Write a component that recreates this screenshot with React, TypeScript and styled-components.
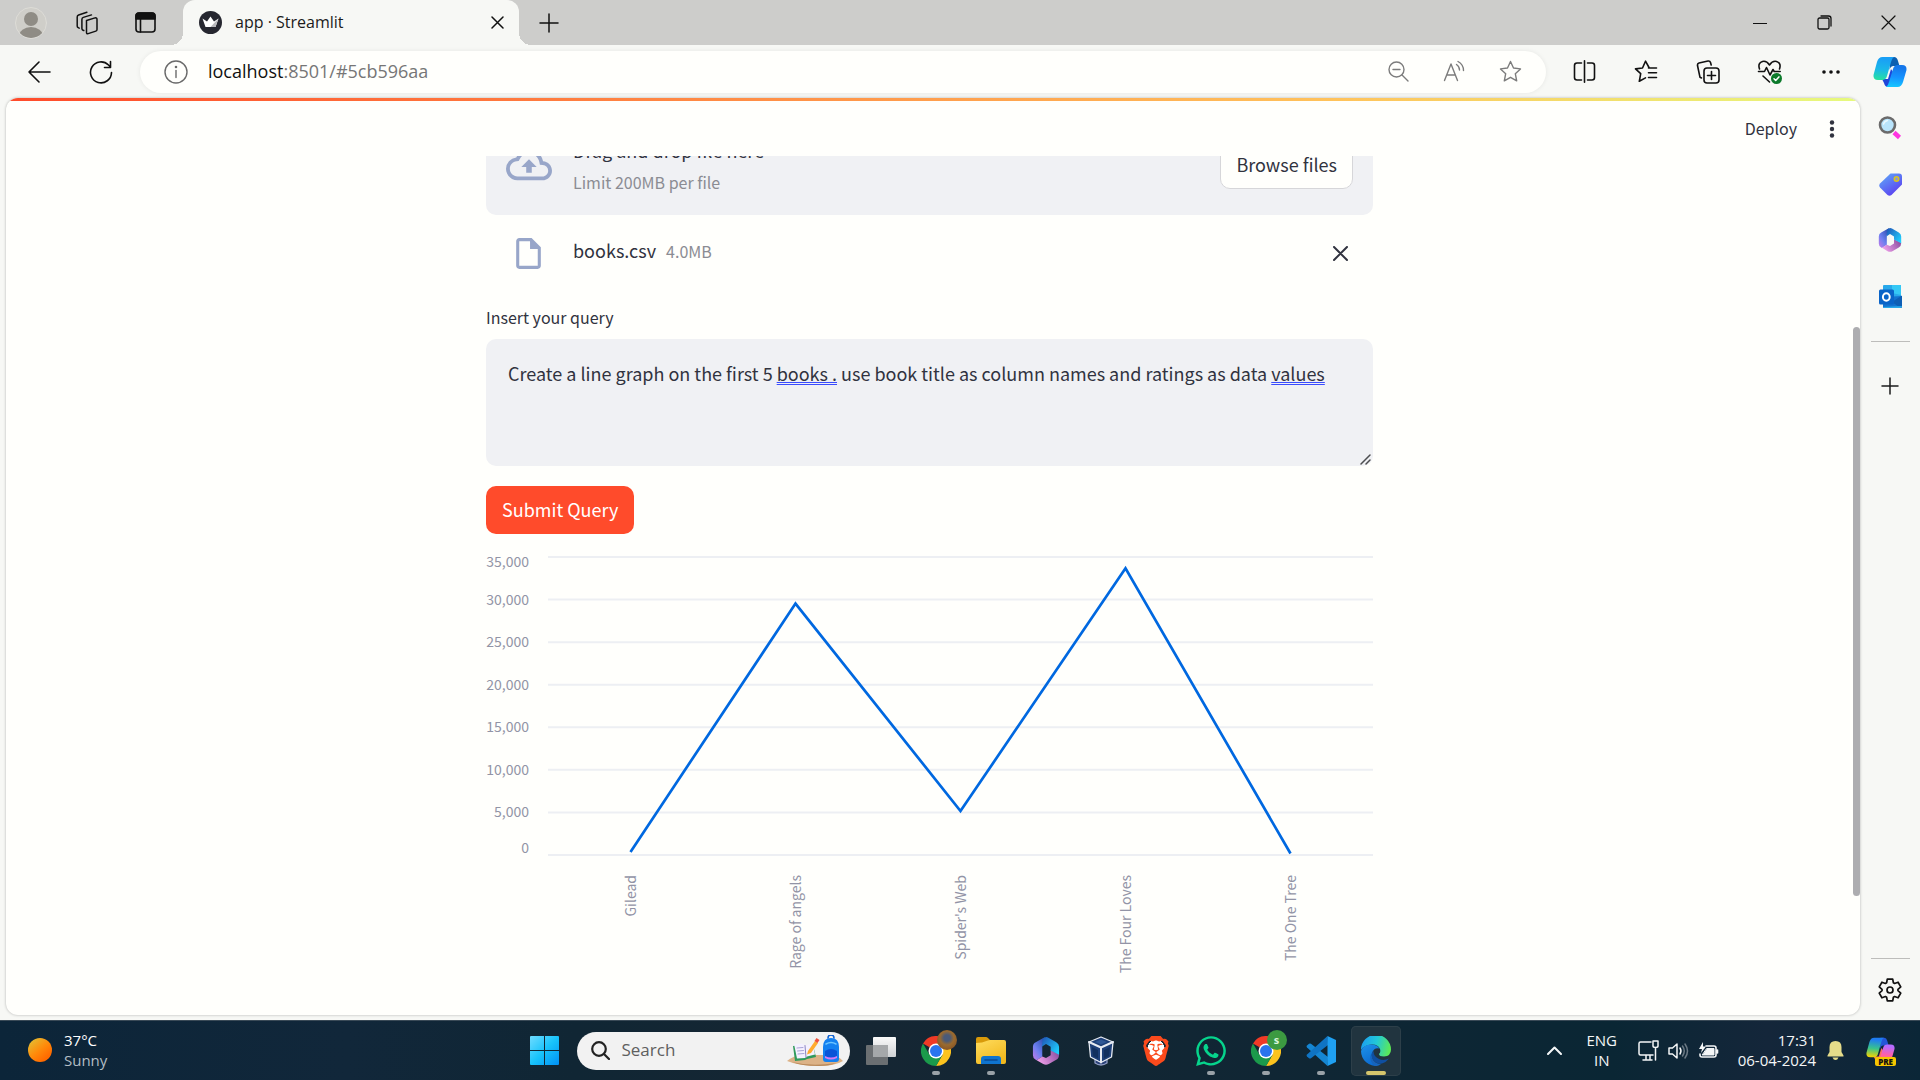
import React from "react";
import styled, { createGlobalStyle, css } from "styled-components";
import { MdOutlineCloudUpload, MdOutlineInsertDriveFile } from "react-icons/md";
import { FaWhatsapp } from "react-icons/fa";
import { SiBrave } from "react-icons/si";

const UI_FONT = `"Open Sans", "Noto Sans", sans-serif`;
const APP_FONT = `"Noto Sans CJK SC", "Noto Sans", sans-serif`;

const color = {
  titleBar: "#cdcdcb",
  chrome: "#f7f8f5",
  page: "#fffffc",
  panel: "#f0f1f4",
  ink: "#31333f",
  muted: "#8b8c93",
  axis: "#9294a6",
  icon: "#98a6c9",
  primary: "#ff4b2b",
  line: "#0068e0",
};

const GlobalStyle = createGlobalStyle`
  * { box-sizing: border-box; }
  body { margin: 0; overflow: hidden; }
  button, input, textarea { font: inherit; color: inherit; }
  button { border: 0; padding: 0; background: none; cursor: pointer; }
  svg { display: block; flex: none; }
`;

/* ---------- Window ---------- */

const Desktop = styled.div`
  display: flex;
  flex-direction: column;
  height: 100vh;
  background: ${color.chrome};
  font-family: ${UI_FONT};
  color: #1b1b1b;
`;

const TitleBar = styled.header`
  display: flex;
  align-items: center;
  height: 45px;
  flex: none;
  background: ${color.titleBar};
`;

const IconButton = styled.button<{ $w: number; $color?: string }>`
  display: flex;
  align-items: center;
  justify-content: center;
  flex: none;
  width: ${(p) => p.$w}px;
  height: 40px;
  color: ${(p) => p.$color ?? "#111"};
`;

const Tab = styled.div`
  position: relative;
  display: flex;
  align-items: center;
  align-self: stretch;
  width: 336px;
  padding: 0 6px 0 16px;
  border-radius: 12px 12px 0 0;
  background: ${color.chrome};
  font-size: 16px;
  &::before,
  &::after {
    content: "";
    position: absolute;
    bottom: 0;
    width: 12px;
    height: 12px;
  }
  &::before {
    right: 100%;
    background: radial-gradient(circle at 0 0, transparent 12px, ${color.chrome} 12px);
  }
  &::after {
    left: 100%;
    background: radial-gradient(circle at 100% 0, transparent 12px, ${color.chrome} 12px);
  }
`;

const TabTitle = styled.span`
  flex: 1;
  margin-left: 13px;
  padding-bottom: 2px;
`;

const TabTools = styled.div`
  display: flex;
  width: 183px;
  padding-left: 2px;
`;

const WindowControls = styled.div`
  display: flex;
  margin-left: auto;
`;

const Toolbar = styled.nav`
  display: flex;
  align-items: center;
  flex: none;
  height: 53px;
  padding: 0 1px 0 8px;
`;

const AddressBar = styled.form`
  display: flex;
  align-items: center;
  flex: 1;
  height: 42px;
  margin: 0 7px 0 8px;
  padding: 0 8px 0 16px;
  border-radius: 21px;
  background: ${color.page};
  box-shadow: 0 0 5px rgba(0, 0, 0, 0.07);
`;

const Url = styled.a`
  flex: 1;
  margin-left: 12px;
  padding-bottom: 2px;
  color: #767676;
  font-size: 18px;
  text-decoration: none;
  b {
    color: #111;
    font-weight: 400;
  }
`;

const Workspace = styled.div`
  display: flex;
  flex: 1;
  min-height: 0;
  padding: 0 0 5px 6px;
`;

const Viewport = styled.div`
  display: flex;
  flex-direction: column;
  flex: 1;
  overflow: hidden;
  border-radius: 12px;
  background: ${color.page};
  box-shadow: 0 0 3px rgba(0, 0, 0, 0.28);
  font-family: ${APP_FONT};
  color: ${color.ink};
`;

const Decoration = styled.div`
  flex: none;
  height: 3px;
  background: linear-gradient(90deg, #ff4b2b, #ffc35b 72%, #e6fa7e);
`;

const ViewportBody = styled.div`
  display: flex;
  flex: 1;
  min-height: 0;
`;

const AppColumn = styled.div`
  display: flex;
  flex-direction: column;
  flex: 1;
`;

const Track = styled.div`
  display: flex;
  flex-direction: column;
  width: 7px;
  &::before {
    content: "";
    flex: 226;
  }
  &::after {
    content: "";
    flex: 119;
  }
`;

const Thumb = styled.div`
  flex: 569;
  border-radius: 4px;
  background: #adadb0;
`;

/* ---------- Streamlit app ---------- */

const AppHeader = styled.header`
  display: flex;
  align-items: center;
  justify-content: flex-end;
  flex: none;
  height: 55px;
  padding-right: 4px;
`;

const DeployButton = styled.button`
  margin-right: 18px;
  padding-bottom: 2px;
  font-size: 16px;
  line-height: 24px;
`;

const ScrollArea = styled.main`
  flex: 1;
  overflow: hidden;
`;

const Block = styled.div`
  display: flex;
  flex-direction: column;
  width: 100%;
  max-width: 887px;
  margin: -41px auto 0;
`;

const Dropzone = styled.section`
  display: flex;
  align-items: center;
  height: 100px;
  padding: 0 20px;
  border-radius: 10px;
  background: ${color.panel};
`;

const DropText = styled.div`
  display: flex;
  flex-direction: column;
  flex: 1;
  margin-left: 21px;
  padding-top: 2px;
  font-size: 18px;
  line-height: 32px;
  small {
    color: ${color.muted};
    font-size: 16px;
  }
`;

const OutlineButton = styled.button`
  height: 48px;
  padding: 0 15px 2px;
  border: 1px solid #d6d6d9;
  border-radius: 10px;
  background: ${color.page};
  font-size: 18px;
  line-height: 32px;
`;

const FileRow = styled.div`
  display: flex;
  align-items: center;
  height: 40px;
  margin-top: 18px;
  padding: 0 18px 0 24px;
`;

const FileName = styled.div`
  display: flex;
  align-items: baseline;
  flex: 1;
  gap: 10px;
  margin-left: 26px;
  padding-bottom: 6px;
  font-size: 18px;
  line-height: 32px;
  small {
    color: ${color.muted};
    font-size: 16px;
  }
`;

const FieldLabel = styled.label`
  margin-top: 31px;
  font-size: 16px;
  line-height: 26px;
`;

const Field = styled.div`
  position: relative;
  display: flex;
  margin-top: 9px;
`;

const queryText = css`
  width: 100%;
  height: 127px;
  padding: 18px 22px;
  border: 0;
  border-radius: 10px;
  font-family: ${APP_FONT};
  font-size: 18px;
  line-height: 32px;
  white-space: pre-wrap;
`;

const QueryInput = styled.textarea`
  ${queryText}
  display: block;
  background: ${color.panel};
  outline: none;
  resize: vertical;
  &::-webkit-resizer {
    display: none;
  }
`;

/* Grammar marks lie over the text box and repeat its text without colour. */
const GrammarMarks = styled.div`
  ${queryText}
  position: absolute;
  inset: 0;
  color: transparent;
  pointer-events: none;
  u {
    text-decoration: underline double #3a4cff 1px;
    text-underline-offset: 1px;
    text-decoration-skip-ink: none;
  }
`;

const ResizeGrip = styled.span`
  position: absolute;
  right: 2px;
  bottom: 1px;
  color: #4c4d50;
  pointer-events: none;
`;

const PrimaryButton = styled.button`
  align-self: flex-start;
  height: 48px;
  margin-top: 20px;
  padding: 0 16px 2px;
  border-radius: 10px;
  background: ${color.primary};
  color: #fff;
  font-size: 18px;
  line-height: 32px;
`;

const ChartSvg = styled.svg`
  width: 100%;
  margin-top: 20px;
  overflow: visible;
  text {
    font-family: ${APP_FONT};
    font-size: 14px;
    fill: ${color.axis};
  }
`;

/* ---------- Edge side bar ---------- */

const SideBar = styled.aside`
  display: flex;
  flex-direction: column;
  align-items: center;
  width: 60px;
  padding: 10px 0 5px;
`;

const SideButton = styled.button`
  display: flex;
  align-items: center;
  justify-content: center;
  width: 40px;
  height: 40px;
  margin-bottom: 16px;
`;

const Divider = styled.hr<{ $push?: boolean }>`
  width: 39px;
  height: 1px;
  margin: ${(p) => (p.$push ? "auto 0 11px" : "9px 0 24px")};
  border: 0;
  background: #bdbdbb;
`;

/* ---------- Task bar ---------- */

const TaskBar = styled.footer`
  display: grid;
  grid-template-columns: 1fr auto 1fr;
  align-items: center;
  flex: none;
  height: 60px;
  border-top: 1px solid #3a4a57;
  background: linear-gradient(90deg, #0c2539, #11273a 18%, #102634 30%, #162633 42%, #102634 66%, #0a2634 84%, #14263a 92%, #0b2637);
  color: #f4f6f7;
  font-size: 15px;
  line-height: 20px;
`;

const Weather = styled.button`
  display: flex;
  align-items: center;
  gap: 12px;
  padding: 0 0 2px 28px;
  color: #fff;
  text-align: left;
  span {
    display: block;
    color: #b3bdc4;
  }
`;

const Sun = styled.i`
  width: 24px;
  height: 24px;
  border-radius: 50%;
  background: linear-gradient(140deg, #e6b92e 12%, #ff8a0a 50%, #ff6a00 80%);
`;

const Dock = styled.div`
  display: flex;
  align-items: center;
  gap: 5px;
`;

const DockButton = styled.button<{ $active?: boolean; $running?: boolean }>`
  position: relative;
  display: flex;
  align-items: center;
  justify-content: center;
  width: 50px;
  height: 50px;
  border-radius: 5px;
  background: ${(p) => (p.$active ? "#21343f" : "none")};
  box-shadow: ${(p) => (p.$active ? "inset 0 0 0 1px #2d3f49" : "none")};
  &::after {
    content: "";
    display: ${(p) => (p.$active || p.$running ? "block" : "none")};
    position: absolute;
    bottom: 1px;
    left: 50%;
    width: ${(p) => (p.$active ? 20 : 8)}px;
    height: 4px;
    border-radius: 2px;
    background: ${(p) => (p.$active ? "#d5c56c" : "#9aa2a8")};
    transform: translateX(-50%);
  }
`;

const SearchBox = styled.label`
  display: flex;
  align-items: center;
  width: 273px;
  height: 38px;
  margin: 0 1px 0 2px;
  padding: 0 6px 0 14px;
  border-radius: 19px;
  background: #f2f2f2;
  color: #222;
`;

const SearchInput = styled.input`
  flex: 1;
  min-width: 0;
  margin-left: 12px;
  padding: 0 0 1px;
  border: 0;
  outline: 0;
  background: none;
  font-size: 17px;
  &::placeholder {
    color: #5f5f5f;
    opacity: 1;
  }
`;

const AppBadge = styled.span<{ $bg: string }>`
  position: absolute;
  top: 4px;
  right: 4px;
  display: flex;
  align-items: center;
  justify-content: center;
  width: 20px;
  height: 20px;
  border-radius: 50%;
  background: ${(p) => p.$bg};
  color: #d9f5dc;
  font-size: 11px;
  font-weight: 700;
`;

const Tray = styled.div`
  display: flex;
  align-items: center;
  justify-content: flex-end;
  padding-right: 24px;
`;

const TrayButton = styled.button<{ $w: number }>`
  display: flex;
  align-items: center;
  justify-content: center;
  gap: 9px;
  width: ${(p) => p.$w}px;
  height: 48px;
`;

const Language = styled.button`
  width: 48px;
  margin: 0 13px 0 6px;
  padding-bottom: 2px;
  text-align: center;
  font-size: 15px;
`;

const Clock = styled.time`
  margin: 0 11px 0 19px;
  padding-bottom: 2px;
  text-align: right;
`;

/* ---------- Icons ---------- */

type IconProps = { w: number; h?: number; vb?: string; sw?: number; children: React.ReactNode };

const Icon = ({ w, h = w, vb, sw = 1.4, children }: IconProps) => (
  <svg
    width={w}
    height={h}
    viewBox={vb ?? `0 0 ${w} ${h}`}
    fill="none"
    stroke="currentColor"
    strokeWidth={sw}
    strokeLinecap="round"
    strokeLinejoin="round"
    aria-hidden="true"
  >
    {children}
  </svg>
);

const Cross = ({ size, sw }: { size: number; sw?: number }) => (
  <Icon w={size} sw={sw}>
    <path d={`M1 1L${size - 1} ${size - 1}M${size - 1} 1L1 ${size - 1}`} />
  </Icon>
);

const Plus = ({ size }: { size: number }) => (
  <Icon w={size} sw={1.5}>
    <path d={`M${size / 2} 1V${size - 1}M1 ${size / 2}H${size - 1}`} />
  </Icon>
);

const STAR = "M11.5 1.5l3 6.5 7 .9-5.2 4.8 1.4 7.1-6.2-3.5-6.2 3.5 1.4-7.1L1.500 8.900l7-.9z";

const Avatar = () => (
  <Icon w={32}>
    <defs>
      <clipPath id="avatarClip">
        <circle cx="16" cy="16" r="15" />
      </clipPath>
    </defs>
    <circle cx="16" cy="16" r="15.5" fill="#cfcec9" stroke="#dddcd7" strokeWidth="1" />
    <g fill="#8f8c85" stroke="none" clipPath="url(#avatarClip)">
      <circle cx="16" cy="12" r="7" />
      <ellipse cx="16" cy="29" rx="12" ry="9" />
    </g>
  </Icon>
);

const Workspaces = () => (
  <Icon w={24} sw={1.500}>
    <path d="M11.500 9.500l8.500-2.600q2-.5 2 1.500v10q0 1.300-1.200 1.700l-7.600 2.500q-1.700.5-1.700-1.200z" />
    <path d="M8.800 19.500l-.8-.3q-1.100-.4-1.100-1.600V8.400q0-1.500 1.400-2l8.200-2.500" />
    <path d="M4.200 17.200l-1-.5q-1-.5-1-1.700V6q0-1.500 1.400-2l8.300-2.700" />
  </Icon>
);

const TabActions = () => (
  <Icon w={21} sw={1.600}>
    <rect x="1" y="1" width="19" height="19" rx="3" />
    <path d="M1 7V4q0-3 3-3h13q3 0 3 3v3z" fill="currentColor" />
    <path d="M5.500 7v13" />
  </Icon>
);

const Favicon = () => (
  <Icon w={23}>
    <circle cx="11.500" cy="11.500" r="11.500" fill="#262730" stroke="none" />
    <path d="M3.500 7.500l4.500 3 3.500-5 3.500 5 4.500-3-3 8.500h-10z" fill="#fff" stroke="none" />
    <path d="M11.500 16l8-8.500-3 8.500z" fill="#b9b9bd" stroke="none" />
  </Icon>
);

const ZoomOut = () => (
  <Icon w={21}>
    <circle cx="8.500" cy="8.500" r="7.500" />
    <path d="M5 8.500h7M14 14l6 6" />
  </Icon>
);

const ReadAloud = () => (
  <Icon w={23}>
    <path d="M1.500 20.500L8 4l6.500 16.500M3.800 15h8.500M13.500 4.500q3 2 3 5.500M15 1.500q5.500 3 5.500 9" />
  </Icon>
);

const SplitScreen = () => (
  <Icon w={23} sw={1.600}>
    <path d="M8.500 3H4Q1.500 3 1.500 5.500v12Q1.500 20 4 20h4.500M14.500 3H19q2.500 0 2.500 2.500v12Q21.500 20 19 20h-4.500M11.500 .8v21.400" />
  </Icon>
);

const Favorites = () => (
  <Icon w={24} sw={1.600}>
    <path d="M15 7.500L11.500 1.200 8.500 8l-7 .9 5.200 4.800-1.400 7.600 6.200-3.400M14.500 8h8M14.500 12.700h8M14.500 17.500h8" />
  </Icon>
);

const Collections = () => (
  <Icon w={24} sw={1.600}>
    <rect x="8" y="8" width="15" height="15" rx="3" />
    <path d="M15.500 11.500v8M11.500 15.500h8M5.500 18L4 17.300 1.500 5.500Q1.200 3.500 3 3l9-2q2-.3 2.500 1.500l.7 2.500" />
  </Icon>
);

const Essentials = () => (
  <Icon w={26} sw={1.600}>
    <path d="M2.500 10Q.5 4 5.500 2.500 9.500 1.500 12.500 6 15.500 1.500 19.500 2.500q5 1.500 3 7.500M1.500 12.500h6l2-4 3.500 7.500 3-5.500 1.200 2h6M6 17l6.500 6" />
    <circle cx="19.500" cy="19.500" r="5.500" fill="#0c7a2b" stroke="none" />
    <path d="M17 19.700l1.700 1.700 3.200-3.500" stroke="#fff" strokeWidth="1.500" />
  </Icon>
);

const CopilotLogo = ({ size, warm }: { size: number; warm?: boolean }) => {
  const id = warm ? "cw" : "cc";
  const stops = warm
    ? [["#1f7cf2", "#38c48c", "#f5d300"], ["#b66bff", "#ff5fa8", "#ff8a4a"]]
    : [["#1aa0f5", "#1ab8e8", "#27e0a0"], ["#1577ea", "#1593ff", "#16c6ff"]];
  return (
    <Icon w={size} vb="0 0 34 32">
      <defs>
        {stops.map((s, i) => (
          <linearGradient key={i} id={`${id}${i}`} x1="0.500" y1="0" x2="0.400" y2="1">
            <stop offset="0.100" stopColor={s[0]} />
            <stop offset="0.550" stopColor={s[1]} />
            <stop offset="1" stopColor={s[2]} />
          </linearGradient>
        ))}
      </defs>
      <g stroke="none">
        <path d="M17 1h4q3 0 4 4l1.500 5h-6q-3 0-4 4z" fill={warm ? "#2456d8" : "#0c5fb0"} />
        <path d="M9 23h6l3-10 2 3-3 15h-2q-3 0-4-4z" fill={warm ? "#ff6d5a" : "#1f45d8"} />
        <path d="M9.500 1H21q-2 1-3 5l-4 14q-1 4-5 4H5q-5 0-4.500-5L4 6q1.500-5 5.500-5z" fill={`url(#${id}0)`} />
        <path d="M24.500 31H13q2-1 3-5l4-13q1-4 5-4h4q5 0 4.500 5L30 26q-1.500 5-5.500 5z" fill={`url(#${id}1)`} />
      </g>
    </Icon>
  );
};

const M365Logo = ({ size, uid }: { size: number; uid: string }) => (
  <Icon w={size} vb="0 0 28 30">
    <defs>
      <linearGradient id={`${uid}a`} x1="0" y1="1" x2="0.800" y2="0">
        <stop offset="0" stopColor="#c77be8" />
        <stop offset="0.450" stopColor="#6c7ff0" />
        <stop offset="1" stopColor="#2c4fae" />
      </linearGradient>
      <linearGradient id={`${uid}b`} x1="0" y1="0" x2="1" y2="0.800">
        <stop offset="0" stopColor="#1f52b5" />
        <stop offset="1" stopColor="#1fd0ff" />
      </linearGradient>
      <linearGradient id={`${uid}c`} x1="0" y1="0.600" x2="1" y2="0.200">
        <stop offset="0" stopColor="#f0a0ea" />
        <stop offset="1" stopColor="#8a4d9f" />
      </linearGradient>
    </defs>
    <g stroke="none">
      <path d="M13 0L3 5.500Q0 7 0 10.500v9Q0 23 3 24.500l1 .5 6-4V9z" fill={`url(#${uid}a)`} />
      <path d="M28 18.500q0 4.500-3 6L17 29q-3 1.500-6 0l-7-4.200 6-3.800 4 1.500 5-3V14z" fill={`url(#${uid}c)`} />
      <path d="M10.500 1.500L14 0q1.500 0 3 1l8 4.500q3 1.700 3 5V19l-9-4.500v-4L14 7.500l-4.500 3z" fill={`url(#${uid}b)`} />
    </g>
  </Icon>
);

const ShoppingTag = () => (
  <Icon w={23}>
    <defs>
      <linearGradient id="tag" x1="0" y1="0" x2="0.700" y2="1">
        <stop offset="0" stopColor="#5fb0f8" />
        <stop offset="1" stopColor="#5b3df0" />
      </linearGradient>
    </defs>
    <path d="M11.500 .5H20q3 0 3 3v8L12.500 22q-2 1.500-4 0L1 14.500q-1.500-2 0-4z" fill="url(#tag)" stroke="none" />
    <circle cx="17.500" cy="6" r="2.200" stroke="#d8c51e" strokeWidth="1.600" fill="#8b93d8" />
  </Icon>
);

const SideSearch = () => (
  <Icon w={24}>
    <path d="M16 16.500l5.500 5" stroke="#ff35e0" strokeWidth="4.500" strokeLinecap="butt" />
    <circle cx="9.500" cy="9" r="7.500" fill="#b9e4fb" stroke="#6b6b6b" strokeWidth="2.600" />
    <path d="M5.500 8q1-3 4-3.500" stroke="#eaf8ff" strokeWidth="1.500" />
  </Icon>
);

const OutlookLogo = () => (
  <Icon w={23}>
    <g stroke="none">
      <rect x="4" y="0" width="18" height="13" rx="1" fill="#28a8ea" />
      <path d="M13 0h9v10l-9-2z" fill="#35c8f5" />
      <path d="M4 12l19-1v10q0 2-2 2H5q-1 0-1-1z" fill="#1373cf" />
      <path d="M23 10.500v11q0 1.500-1.500 1.500L13 17z" fill="#0e5fb5" />
      <path d="M4 22l19-1q0 2-2 2H5z" fill="#28a8ea" />
      <rect x="0" y="4.500" width="15" height="15" rx="1.500" fill="#0a64c8" />
    </g>
    <ellipse cx="7.300" cy="12" rx="3.400" ry="3.800" stroke="#fff" strokeWidth="2" />
  </Icon>
);

const Gear = () => {
  const pts: string[] = [];
  for (let i = 0; i < 6; i += 1) {
    const at = (r: number, deg: number) => {
      const a = ((i * 60 + deg) * Math.PI) / 180;
      return `${(12 + r * Math.sin(a)).toFixed(2)} ${(12 - r * Math.cos(a)).toFixed(2)}`;
    };
    pts.push(at(8, -25), at(11.2, -14), at(11.2, 14), at(8, 25));
  }
  return (
    <Icon w={24} sw={1.700}>
      <path d={`M${pts.join("L")}Z`} />
      <circle cx="12" cy="12" r="3" />
    </Icon>
  );
};

const WindowsLogo = () => (
  <Icon w={29}>
    <defs>
      <linearGradient id="win" x1="0" y1="0" x2="1" y2="1">
        <stop offset="0" stopColor="#6fdcff" />
        <stop offset="0.500" stopColor="#18c3fb" />
        <stop offset="1" stopColor="#0090f5" />
      </linearGradient>
    </defs>
    <path d="M0 1q0-1 1-1h13v14H0zM15 0h13q1 0 1 1v13H15zM0 15h14v14H1q-1 0-1-1zM15 15h14v13q0 1-1 1H15z" fill="url(#win)" stroke="none" />
  </Icon>
);

const SchoolArt = () => (
  <Icon w={58} h={32}>
    <g stroke="none">
      <path d="M1 26q6-5 14-6h32q6 2 10 6-8 5-24 5-20 0-32-5z" fill="#dcb287" />
      <path d="M6 27q20 5 44 1-6 3-17 3-18 0-27-4z" fill="#b98a5c" />
      <path d="M7 11l9-1 3 2 8-2 3 12-9 2-2 1-10 1z" fill="#2f9a5c" />
      <path d="M8 9l8-.5 3 2 8-2 2 11-8 2-2 1.500-8 .5z" fill="#f4f0ff" />
      <path d="M19 10.500l1 12" stroke="#8c86c0" strokeWidth="1" />
      <path d="M11 13l6-.5M11.500 16l6-.5M12 19l6-.5" stroke="#a9a4d8" strokeWidth="1" />
      <path d="M22 16l7-10 3 2-7 10-4 1.500z" fill="#ffab2e" />
      <path d="M28.500 6l2-3 3 2-2 3z" fill="#f0523d" />
      <path d="M37 12q0-9 8-9t8 9v12q0 3-3 3H40q-3 0-3-3z" fill="#1480f0" />
      <path d="M42 3q0-3 3-3t3 3" stroke="#0c5fd0" strokeWidth="1.500" />
      <path d="M39 16q6-4 12 0v5q0 3-6 3t-6-3z" fill="#0a54d8" />
      <path d="M39 21q6 3 12 0v2q-6 3-12 0z" fill="#d77bf5" />
      <path d="M40 9q5-3 10 0" stroke="#6cc4ff" strokeWidth="1.500" />
    </g>
  </Icon>
);

const TaskView = () => (
  <Icon w={30} h={28}>
    <defs>
      <linearGradient id="tv" x1="0" y1="0" x2="0" y2="1">
        <stop offset="0" stopColor="#fafafa" />
        <stop offset="1" stopColor="#cfd2d4" />
      </linearGradient>
    </defs>
    <g stroke="none">
      <rect x="0" y="8" width="22" height="20" rx="1" fill="#6b6f72" />
      <rect x="7" y="0" width="23" height="20" rx="1" fill="url(#tv)" />
      <path d="M7 8h15v12H7z" fill="#a5a8aa" />
    </g>
  </Icon>
);

const ChromeLogo = () => (
  <Icon w={30}>
    <g stroke="none">
      <path d="M15 15L2 7.500A15 15 0 0128 7.500H15z" fill="#f03a26" />
      <path d="M28 7.500A15 15 0 0115 30L21.500 18.800 15 7.500z" fill="#fcc31e" />
      <path d="M2 7.500A15 15 0 0015 30l6.500-11.200L8.500 18.800z" fill="#1b9a4b" />
      <circle cx="15" cy="15" r="7.500" fill="#fff" />
      <circle cx="15" cy="15" r="6" fill="#2a74ee" />
    </g>
  </Icon>
);

const FolderLogo = () => (
  <Icon w={30} h={27}>
    <defs>
      <linearGradient id="fold" x1="0" y1="0" x2="0.600" y2="1">
        <stop offset="0" stopColor="#ffdc5e" />
        <stop offset="1" stopColor="#f2b91e" />
      </linearGradient>
    </defs>
    <g stroke="none">
      <path d="M0 8V2q0-2 2-2h8q1 0 2 1l2 2v5z" fill="#d99a0a" />
      <path d="M0 6q6 0 12-2.500l2-.5h14q2 0 2 2v20q0 2-2 2H2q-2 0-2-2z" fill="url(#fold)" />
      <path d="M5 27v-5q0-3 3-3h14q3 0 3 3v5z" fill="#0f74cf" />
    </g>
    <path d="M9 23h12" stroke="#0b4a94" strokeWidth="1.600" />
  </Icon>
);

const VirtualBoxLogo = () => (
  <Icon w={26} h={30} sw={1.300}>
    <path d="M7 23q6 4 12 0v4q-6 4-12 0z" fill="#2a4178" stroke="#8f9cc2" />
    <path d="M13 1l12 5-1.500 15L13 26.500 2.500 21 1 6z" fill="#1d3f78" stroke="#e6eaf2" />
    <path d="M1 6l12 5.500L25 6M13 11.500v15" stroke="#e6eaf2" strokeWidth="2" />
    <path d="M7 6l6-2.500L19 6l-6 2.500z" fill="#2f5796" stroke="none" />
    <path d="M16 14l6-3-1 9-5 2.500zM10 14l-6-3 1 9 5 2.500z" fill="#12305f" stroke="none" />
  </Icon>
);

const BraveMark = styled.span`
  display: grid;
  color: #fb4a1c;
  background: radial-gradient(ellipse 9px 11px at 50% 48%, #fff 96%, transparent);
`;

const VsCodeLogo = () => (
  <Icon w={30}>
    <g stroke="none">
      <path d="M21.500 30L1 11.500q-1-1 0-2l2-1.700q1-.7 2 0L22 21z" fill="#1586d3" />
      <path d="M21.500 0L1 18.500q-1 1 0 2l2 1.700q1 .7 2 0L22 9z" fill="#0f74c4" />
      <path d="M21.500 0L30 4v22l-8.500 4V0z" fill="#1fa0f2" />
    </g>
  </Icon>
);

const EdgeLogo = () => (
  <Icon w={30}>
    <defs>
      <linearGradient id="edgeA" x1="0" y1="0.300" x2="1" y2="0.500">
        <stop offset="0" stopColor="#1b9df0" />
        <stop offset="0.500" stopColor="#22c8d8" />
        <stop offset="1" stopColor="#5cea55" />
      </linearGradient>
      <linearGradient id="edgeB" x1="0" y1="0" x2="0.500" y2="1">
        <stop offset="0" stopColor="#1d93ea" />
        <stop offset="1" stopColor="#0c6ad0" />
      </linearGradient>
    </defs>
    <g stroke="none">
      <path d="M0 14A15 15 0 0130 13.500Q30 20 23 20.500 18 20.500 18 18q2-2 1-5Q17 8 10.500 8.500 3 9 0 14z" fill="url(#edgeA)" />
      <path d="M0 15Q2 8.500 10 8.500q6 0 8.500 4-6-1-7.500 5-1 8 6 12.300A15 15 0 010 15z" fill="url(#edgeB)" />
      <path d="M12.500 15Q9 18 11 22q3 6.500 10 5.500 4-1 7-5-5 2.500-10 .5-5.500-2.500-5.500-8z" fill="#0f4fa0" />
      <path d="M11 22q2 5.500 9 6-2 2-6 1.900Q8 26 9.500 18q0 2 1.500 4z" fill="#1664bd" />
    </g>
  </Icon>
);

const Monitor = () => (
  <Icon w={21} sw={1.500}>
    <path d="M13 2H2.500Q1 2 1 3.500v10Q1 15 2.500 15H15M8 15v4M12 15v4M5 20h9" />
    <path d="M15 1h5v5q0 1.500-2.500 1.500T15 6zM17.500 7.500V20" />
  </Icon>
);

const Speaker = () => (
  <Icon w={21} h={18} sw={1.500}>
    <path d="M1 6h3.500L9 2v14l-4.500-4H1zM12 6q2 3 0 6" />
    <path d="M14.500 4q3.500 5 0 10M17 2q5 7 0 14" opacity="0.400" />
  </Icon>
);

const Battery = () => (
  <Icon w={21} h={18} sw={1.600}>
    <path d="M8 4h8q2 0 2 2v7q0 2-2 2H4q-2 0-2-2v-1M19.500 8v3" />
    <path d="M9 6.500h7V13H4.500z" fill="currentColor" strokeWidth="1" />
    <path d="M5 0L1 7h3L3 11l5-6.500H5z" fill="currentColor" stroke="none" />
  </Icon>
);

const Bell = () => (
  <Icon w={17} h={19}>
    <path d="M8.500 0q6 0 6 6v5l2 3.500v1H.5v-1l2-3.500V6q0-6 6-6zM5.500 16.500h6q-1 2.500-3 2.500t-3-2.500z" fill="#e5dc8a" stroke="none" />
  </Icon>
);

const CopilotTray = styled.button`
  position: relative;
  width: 30px;
  margin-left: 22px;
  span {
    position: absolute;
    right: 0;
    bottom: -1px;
    padding: 0 3px;
    border-radius: 2px;
    background: #f7c600;
    color: #111;
    font-size: 8px;
    font-weight: 800;
    line-height: 9px;
  }
`;

/* ---------- Chart ---------- */

const TICKS = [0, 5000, 10000, 15000, 20000, 25000, 30000, 35000];
const BOOKS = [
  { title: "Gilead", ratings: 361 },
  { title: "Rage of angels", ratings: 29532 },
  { title: "Spider's Web", ratings: 5164 },
  { title: "The Four Loves", ratings: 33684 },
  { title: "The One Tree", ratings: 172 },
];

const PLOT = { left: 62, right: 887, top: 3, bottom: 301 };
const yOf = (v: number) => PLOT.bottom - (v / 35000) * (PLOT.bottom - PLOT.top);
const xOf = (i: number) => PLOT.left + ((i + 0.5) * (PLOT.right - PLOT.left)) / BOOKS.length;

const tickLabelY = (v: number) => {
  if (v === 0) return yOf(v) - 2;
  if (v === 35000) return yOf(v) + 10;
  return yOf(v) + 5;
};

const RatingsChart = () => (
  <ChartSvg viewBox="0 0 887 430" role="img" aria-label="Ratings by book">
    {TICKS.map((v) => (
      <g key={v}>
        <line x1={PLOT.left} x2={PLOT.right} y1={yOf(v)} y2={yOf(v)} stroke="#edeff3" strokeWidth="2" />
        <text x="43" y={tickLabelY(v)} textAnchor="end">
          {v.toLocaleString("en-US")}
        </text>
      </g>
    ))}
    <polyline
      points={BOOKS.map((b, i) => `${xOf(i)},${yOf(b.ratings)}`).join(" ")}
      fill="none"
      stroke={color.line}
      strokeWidth="2.700"
    />
    {BOOKS.map((b, i) => (
      <text key={b.title} transform={`translate(${xOf(i) + 5} 321) rotate(-90)`} textAnchor="end">
        {b.title}
      </text>
    ))}
  </ChartSvg>
);

/* ---------- Page ---------- */

export default function App() {
  return (
    <Desktop>
      <GlobalStyle />
      <TitleBar>
        <TabTools>
          <IconButton $w={58} aria-label="Profile"><Avatar /></IconButton>
          <IconButton $w={54} aria-label="Workspaces"><Workspaces /></IconButton>
          <IconButton $w={62} aria-label="Tab actions"><TabActions /></IconButton>
        </TabTools>
        <Tab>
          <Favicon />
          <TabTitle>app · Streamlit</TabTitle>
          <IconButton $w={32} aria-label="Close tab"><Cross size={13} sw={1.500} /></IconButton>
        </Tab>
        <IconButton $w={60} aria-label="New tab"><Plus size={20} /></IconButton>
        <WindowControls>
          <IconButton $w={64} aria-label="Minimize">
            <Icon w={14} sw={1.200}><path d="M0 7.500h14" /></Icon>
          </IconButton>
          <IconButton $w={64} aria-label="Restore">
            <Icon w={15} sw={1.300}>
              <rect x="1" y="3" width="11" height="11" rx="1.500" />
              <path d="M4 1h7.500Q14 1 14 3.500V11" />
            </Icon>
          </IconButton>
          <IconButton $w={64} aria-label="Close"><Cross size={15} sw={1.200} /></IconButton>
        </WindowControls>
      </TitleBar>

      <Toolbar>
        <IconButton $w={62} aria-label="Back">
          <Icon w={24} sw={1.600}><path d="M12 2L2 12l10 10M2 12h21" /></Icon>
        </IconButton>
        <IconButton $w={62} aria-label="Refresh">
          <Icon w={24} sw={1.600}><path d="M22.500 12.500A10.500 10.500 0 1119.500 5l2 2M21.500 1.500V7.500H15.500" /></Icon>
        </IconButton>
        <AddressBar>
          <IconButton $w={40} $color="#6a6a6a" type="button" aria-label="Site information">
            <Icon w={24}>
              <circle cx="12" cy="12" r="11" />
              <path d="M12 10.500v7" />
              <circle cx="12" cy="7" r="0.600" fill="currentColor" />
            </Icon>
          </IconButton>
          <Url href="#5cb596aa"><b>localhost</b>:8501/#5cb596aa</Url>
          <IconButton $w={56} $color="#7c7c7c" type="button" aria-label="Zoom"><ZoomOut /></IconButton>
          <IconButton $w={56} $color="#7c7c7c" type="button" aria-label="Read aloud"><ReadAloud /></IconButton>
          <IconButton $w={56} $color="#7c7c7c" type="button" aria-label="Add to favorites">
            <Icon w={23}><path d={STAR} /></Icon>
          </IconButton>
        </AddressBar>
        <IconButton $w={62} aria-label="Split screen"><SplitScreen /></IconButton>
        <IconButton $w={62} aria-label="Favorites"><Favorites /></IconButton>
        <IconButton $w={62} aria-label="Collections"><Collections /></IconButton>
        <IconButton $w={62} aria-label="Browser essentials"><Essentials /></IconButton>
        <IconButton $w={60} aria-label="Settings and more">
          <Icon w={20} h={4}>
            <g fill="currentColor" stroke="none">
              <circle cx="3" cy="2" r="1.800" /><circle cx="10" cy="2" r="1.800" /><circle cx="17" cy="2" r="1.800" />
            </g>
          </Icon>
        </IconButton>
        <IconButton $w={58} aria-label="Copilot"><CopilotLogo size={34} /></IconButton>
      </Toolbar>

      <Workspace>
        <Viewport>
          <Decoration />
          <ViewportBody>
            <AppColumn>
              <AppHeader>
                <DeployButton>Deploy</DeployButton>
                <IconButton $w={34} $color={color.ink} aria-label="Main menu">
                  <Icon w={6} h={18}>
                    <g fill="currentColor" stroke="none">
                      <circle cx="3" cy="2.500" r="2.200" /><circle cx="3" cy="9" r="2.200" /><circle cx="3" cy="15.500" r="2.200" />
                    </g>
                  </Icon>
                </IconButton>
              </AppHeader>
              <ScrollArea>
                <Block>
                  <Dropzone>
                    <MdOutlineCloudUpload size={46} color={color.icon} />
                    <DropText>
                      Drag and drop file here
                      <small>Limit 200MB per file</small>
                    </DropText>
                    <OutlineButton>Browse files</OutlineButton>
                  </Dropzone>
                  <FileRow>
                    <MdOutlineInsertDriveFile size={37} color={color.icon} />
                    <FileName>
                      books.csv
                      <small>4.0MB</small>
                    </FileName>
                    <IconButton $w={30} $color={color.ink} aria-label="Remove file"><Cross size={15} sw={2} /></IconButton>
                  </FileRow>
                  <FieldLabel htmlFor="query">Insert your query</FieldLabel>
                  <Field>
                    <QueryInput
                      id="query"
                      spellCheck={false}
                      defaultValue="Create a line graph on the first 5 books . use book title as column names and ratings as data values"
                    />
                    <GrammarMarks aria-hidden="true">
                      Create a line graph on the first 5 <u>books .</u> use book title as column names and ratings as data <u>values</u>
                    </GrammarMarks>
                    <ResizeGrip>
                      <Icon w={11} sw={1.500}><path d="M1 10l9-9M6 10l4-4" /></Icon>
                    </ResizeGrip>
                  </Field>
                  <PrimaryButton>Submit Query</PrimaryButton>
                  <RatingsChart />
                </Block>
              </ScrollArea>
            </AppColumn>
            <Track><Thumb /></Track>
          </ViewportBody>
        </Viewport>

        <SideBar>
          <SideButton aria-label="Search"><SideSearch /></SideButton>
          <SideButton aria-label="Shopping"><ShoppingTag /></SideButton>
          <SideButton aria-label="Microsoft 365"><M365Logo size={24} uid="side" /></SideButton>
          <SideButton aria-label="Outlook"><OutlookLogo /></SideButton>
          <Divider />
          <SideButton aria-label="Customize"><Plus size={18} /></SideButton>
          <Divider $push />
          <IconButton $w={40} aria-label="Settings"><Gear /></IconButton>
        </SideBar>
      </Workspace>

      <TaskBar>
        <Weather>
          <Sun />
          <div>37°C<span>Sunny</span></div>
        </Weather>
        <Dock>
          <DockButton aria-label="Start"><WindowsLogo /></DockButton>
          <SearchBox>
            <Icon w={19} sw={2.200}>
              <circle cx="8" cy="8" r="6.800" />
              <path d="M13 13l5 5" />
            </Icon>
            <SearchInput placeholder="Search" aria-label="Search" />
            <SchoolArt />
          </SearchBox>
          <DockButton aria-label="Task view"><TaskView /></DockButton>
          <DockButton $running aria-label="Chrome">
            <ChromeLogo />
            <AppBadge $bg="radial-gradient(circle at 50% 40%, #4a5a78 20%, #9a6a2e 45%, #8c5a28 70%, #7a3420)" />
          </DockButton>
          <DockButton $running aria-label="File Explorer"><FolderLogo /></DockButton>
          <DockButton aria-label="Microsoft 365"><M365Logo size={28} uid="dock" /></DockButton>
          <DockButton aria-label="VirtualBox"><VirtualBoxLogo /></DockButton>
          <DockButton aria-label="Brave"><BraveMark><SiBrave size={30} /></BraveMark></DockButton>
          <DockButton $running aria-label="WhatsApp"><FaWhatsapp size={34} color="#06d48c" /></DockButton>
          <DockButton $running aria-label="Chrome, second profile">
            <ChromeLogo />
            <AppBadge $bg="#3c9a41">s</AppBadge>
          </DockButton>
          <DockButton $running aria-label="Visual Studio Code"><VsCodeLogo /></DockButton>
          <DockButton $active aria-label="Edge"><EdgeLogo /></DockButton>
        </Dock>
        <Tray>
          <TrayButton $w={34} aria-label="Show hidden icons">
            <Icon w={15} h={9} sw={2}><path d="M1 8l6.500-6.500L14 8" /></Icon>
          </TrayButton>
          <Language>ENG<br />IN</Language>
          <TrayButton $w={80} aria-label="Network, volume and battery">
            <Monitor /><Speaker /><Battery />
          </TrayButton>
          <Clock dateTime="2024-04-06T17:31">17:31<br />06-04-2024</Clock>
          <Bell />
          <CopilotTray aria-label="Copilot">
            <CopilotLogo size={29} warm />
            <span>PRE</span>
          </CopilotTray>
        </Tray>
      </TaskBar>
    </Desktop>
  );
}
